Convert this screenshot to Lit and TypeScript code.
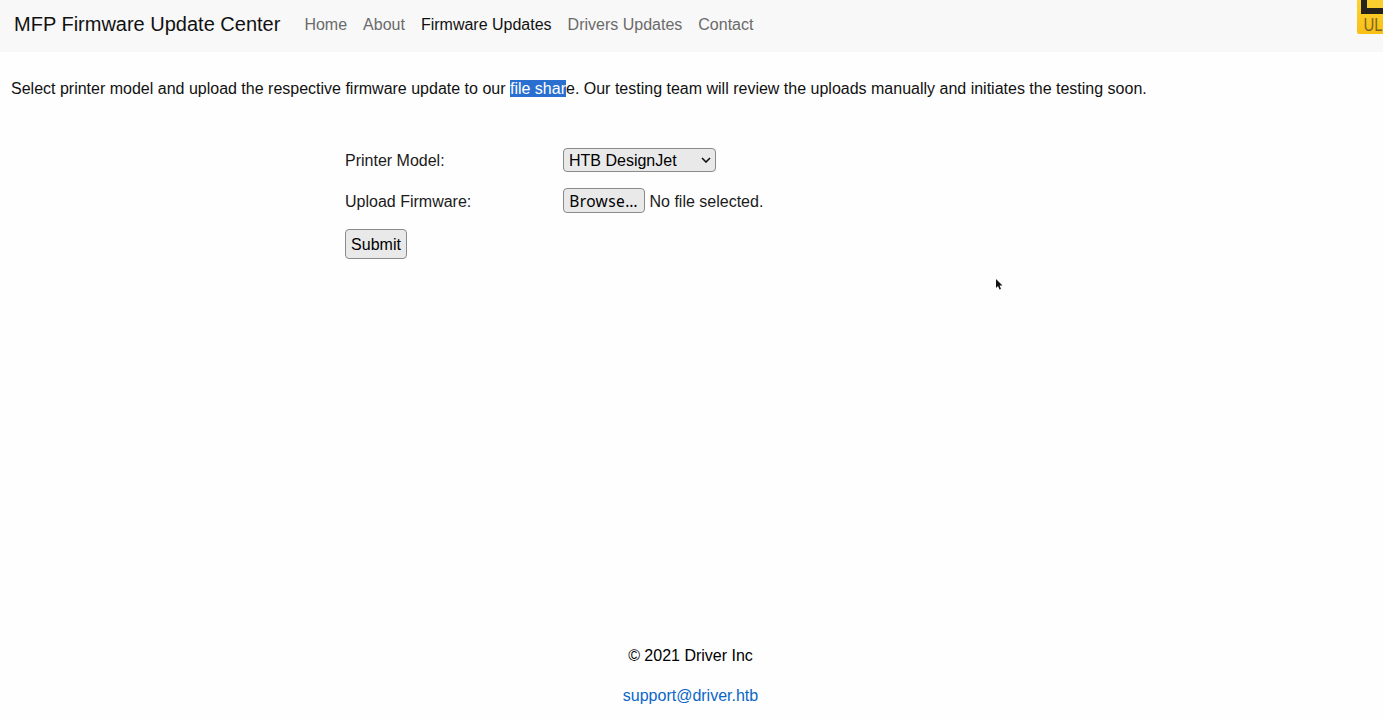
import { LitElement, html, css } from "lit";
import { customElement } from "lit/decorators.js";

@customElement("app-root")
export class AppRoot extends LitElement {
  static styles = css`
    :host {
      display: flex;
      flex-direction: column;
      height: 720px;
      overflow: hidden;
      background: #fefefe;
      color: #000;
      font-family: "Liberation Sans", Arial, sans-serif;
      font-size: 16px;
      position: relative;
    }
    nav {
      box-sizing: border-box;
      height: 52px;
      flex: none;
      background: #f8f8f8;
      display: flex;
      align-items: center;
      padding: 0 0 3px 14px;
    }
    .brand { font-size: 20px; margin-right: 24px; color: #111; }
    .links { display: flex; gap: 16px; }
    .links a { color: #6a6a6a; text-decoration: none; }
    .links a.active { color: #111; }
    .badge {
      position: absolute;
      top: 0;
      left: 1357px;
      width: 26px;
      height: 34px;
      background: linear-gradient(#fdd22f, #f9c016);
      border-radius: 0 0 0 2px;
      overflow: hidden;
    }
    .badge .mark {
      position: absolute;
      left: 4px;
      top: 0;
      width: 22px;
      height: 14px;
      background: #26221c;
    }
    .badge .mark i {
      position: absolute;
      left: 6px;
      top: 0;
      width: 16px;
      height: 8px;
      background: #f9cf2f;
    }
    .badge .tx {
      position: absolute;
      left: 6.5px;
      top: 15px;
      font-size: 15px;
      line-height: 20px;
      color: #7a6620;
      white-space: nowrap;
      transform: scaleY(1.2);
    }
    .intro { margin: 27px 0 0 11px; line-height: 19px; color: #111; }
    .sel { background: #2a6fd0; color: #fff; }
    form { margin: 50px 0 0 345px; display: flex; flex-direction: column; }
    .row { display: flex; align-items: center; color: #1a1a1a; }
    .row label { width: 217.5px; padding-top: 2px; }
    .r1 { height: 24px; }
    .r2 { height: 25px; margin-top: 16px; }
    .ctl {
      box-sizing: border-box;
      background: #e9e9e9;
      border: 1px solid #8a8a8a;
      border-radius: 4px;
      font: inherit;
      color: #000;
      padding: 0;
      display: flex;
      align-items: center;
    }
    .select {
      width: 153px;
      height: 24px;
      padding: 2px 4px 0 5.5px;
      justify-content: space-between;
    }
    .select svg { margin-top: -2px; }
    .browse { width: 82px; height: 25px; justify-content: center; font-family: "Noto Sans", sans-serif; font-size: 15.5px; letter-spacing: 0.4px; }
    .nofile { margin-left: 5px; padding-top: 2px; }
    .submit { width: 62px; height: 30px; justify-content: center; margin-top: 16px; padding-top: 2px; }
    .cursor { position: absolute; left: 996px; top: 279px; }
    footer { margin-top: auto; padding: 0 2px 15px 0; text-align: center; }
    footer p { margin: 0; line-height: 19px; }
    footer p + p { margin-top: 21px; }
    footer a { color: #0a66c8; text-decoration: none; }
  `;

  render() {
    return html`
      <nav>
        <span class="brand">MFP Firmware Update Center</span>
        <div class="links">
          <a>Home</a><a>About</a><a class="active">Firmware Updates</a><a>Drivers Updates</a><a>Contact</a>
        </div>
      </nav>
      <div class="badge"><div class="mark"><i></i></div><span class="tx">UL</span></div>
      <p class="intro">
        Select printer model and upload the respective firmware update to our <span class="sel">file shar</span>e. Our testing team will review the uploads manually and initiates the testing soon.
      </p>
      <form>
        <div class="row r1">
          <label>Printer Model:</label>
          <div class="ctl select">
            <span>HTB DesignJet</span>
            <svg width="10" height="6" viewBox="0 0 10 6"><path d="M1 1l4 4 4-4" fill="none" stroke="#111" stroke-width="1.6"/></svg>
          </div>
        </div>
        <div class="row r2">
          <label>Upload Firmware:</label>
          <button type="button" class="ctl browse">Browse…</button>
          <span class="nofile">No file selected.</span>
        </div>
        <div><button type="button" class="ctl submit">Submit</button></div>
      </form>
      <svg class="cursor" width="7" height="12" viewBox="0 0 7 12"><path d="M0 0v9l2-2 1.5 3.5 1.5-.6L3.6 6.6H6.5z" fill="#111"/></svg>
      <footer>
        <p>© 2021 Driver Inc</p>
        <p><a>support@driver.htb</a></p>
      </footer>
    `;
  }
}
